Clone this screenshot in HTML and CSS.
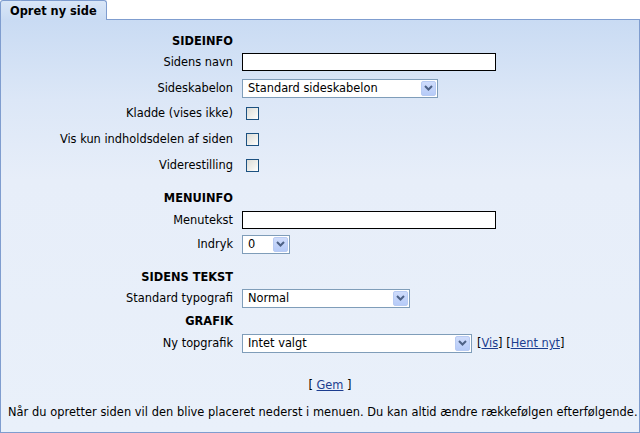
FILE: index.html
```html
<!DOCTYPE html>
<html lang="da">
  <head>
    <meta charset="utf-8">
    <title>Opret ny side</title>
    <link rel="stylesheet" href="styles.css">
  </head>
  <body>
    <div class="Tab-Bar">
      <div class="Tab">Opret ny side</div>
    </div>
    <div class="Panel">
      <form class="Form-Container">
        <div class="Row Head"><span class="Label">SIDEINFO</span></div>
        <div class="Row Sp1">
          <label class="Label">Sidens navn</label>
          <input type="text" class="Text-Input">
        </div>
        <div class="Row Sp6">
          <label class="Label">Sideskabelon</label>
          <div class="Select W196"><span>Standard sideskabelon</span><span class="Arrow"><svg width="9" height="6" viewBox="0 0 9 6"><path d="M1 1 L4.5 4.5 L8 1" fill="none" stroke="#4d6185" stroke-width="2"/></svg></span></div>
        </div>
        <div class="Row Sp5">
          <label class="Label">Kladde (vises ikke)</label>
          <input type="checkbox" class="Check">
        </div>
        <div class="Row Sp6">
          <label class="Label">Vis kun indholdsdelen af siden</label>
          <input type="checkbox" class="Check">
        </div>
        <div class="Row Sp6">
          <label class="Label">Viderestilling</label>
          <input type="checkbox" class="Check">
        </div>

        <div class="Row Head Sp13"><span class="Label">MENUINFO</span></div>
        <div class="Row Sp2">
          <label class="Label">Menutekst</label>
          <input type="text" class="Text-Input">
        </div>
        <div class="Row Sp4">
          <label class="Label">Indryk</label>
          <div class="Select W48"><span>0</span><span class="Arrow"><svg width="9" height="6" viewBox="0 0 9 6"><path d="M1 1 L4.5 4.5 L8 1" fill="none" stroke="#4d6185" stroke-width="2"/></svg></span></div>
        </div>

        <div class="Row Head Sp13"><span class="Label">SIDENS TEKST</span></div>
        <div class="Row Sp1">
          <label class="Label">Standard typografi</label>
          <div class="Select W168"><span>Normal</span><span class="Arrow"><svg width="9" height="6" viewBox="0 0 9 6"><path d="M1 1 L4.5 4.5 L8 1" fill="none" stroke="#4d6185" stroke-width="2"/></svg></span></div>
        </div>
        <div class="Row Head Sp3"><span class="Label">GRAFIK</span></div>
        <div class="Row Sp2">
          <label class="Label">Ny topgrafik</label>
          <div class="Field-Group">
            <div class="Select W230"><span>Intet valgt</span><span class="Arrow"><svg width="9" height="6" viewBox="0 0 9 6"><path d="M1 1 L4.5 4.5 L8 1" fill="none" stroke="#4d6185" stroke-width="2"/></svg></span></div>
            <span class="Links">[<a href="#">Vis</a>] [<a href="#">Hent nyt</a>]</span>
          </div>
        </div>
      </form>
      <div class="Save">[ <a href="#">Gem</a> ]</div>
      <p class="Note">Når du opretter siden vil den blive placeret nederst i menuen. Du kan altid ændre rækkefølgen efterfølgende.</p>
    </div>
  </body>
</html>
```

FILE: styles.css
```css
html, body {
  margin: 0;
  padding: 0;
}

body {
  width: 640px;
  height: 433px;
  background: #ffffff;
  font-family: 'DejaVu Sans', Verdana, sans-serif;
  font-size: 11.4px;
  color: #000000;
}

.Tab-Bar {
  display: flex;
  height: 19px;
}

.Tab {
  box-sizing: border-box;
  width: 107px;
  height: 20px;
  padding: 3px 0 0 9px;
  border: 1px solid #7f9dcf;
  border-bottom: none;
  border-radius: 3px 3px 0 0;
  background: linear-gradient(#d9e6f7, #c9dbf3);
  font-weight: bold;
  position: relative;
  z-index: 1;
}

.Panel {
  box-sizing: border-box;
  height: 414px;
  border: 1px solid #7f9dcf;
  background: linear-gradient(#c9dbf3 0px, #dce7f7 80px, #e7eef9 160px, #e9f0fa 100%);
}

.Form-Container {
  margin: 0;
  padding-top: 11px;
}

.Row {
  display: grid;
  grid-template-columns: 232px auto;
  column-gap: 9px;
  align-items: center;
  height: 20px;
}

.Label {
  text-align: right;
  white-space: nowrap;
}

.Head .Label {
  font-weight: bold;
}

.Sp1 { margin-top: 1px; }
.Sp2 { margin-top: 2px; }
.Sp3 { margin-top: 3px; }
.Sp4 { margin-top: 4px; }
.Sp5 { margin-top: 5px; }
.Sp6 { margin-top: 6px; }
.Sp13 { margin-top: 13px; }

.Text-Input {
  box-sizing: border-box;
  width: 254px;
  height: 18px;
  margin: 0;
  border: 1px solid #000000;
  background: #ffffff;
  font: inherit;
}

.Check {
  appearance: none;
  -webkit-appearance: none;
  box-sizing: border-box;
  width: 13px;
  height: 13px;
  margin: 0 0 0 4px;
  border: 1px solid #1c5180;
  background: linear-gradient(135deg, #dcdcd7 0%, #f0f0ec 60%, #ffffff 100%);
}

.Select {
  box-sizing: border-box;
  display: flex;
  align-items: center;
  justify-content: space-between;
  height: 19px;
  padding: 0 1px 0 5px;
  border: 1px solid #7f9db9;
  background: #ffffff;
}

.W48 { width: 48px; }
.W168 { width: 168px; }
.W196 { width: 196px; }
.W230 { width: 230px; }

.Arrow {
  box-sizing: border-box;
  display: flex;
  align-items: center;
  justify-content: center;
  width: 15px;
  height: 15px;
  border: 1px solid #b8cbf3;
  border-radius: 2px;
  background: linear-gradient(#cfdcfb, #b6cbf8);
}

.Field-Group {
  display: flex;
  align-items: center;
  gap: 5px;
}

a {
  color: #1c3d8f;
  text-decoration: underline;
}

.Save {
  margin-top: 25px;
  padding-left: 20px;
  text-align: center;
  line-height: 14px;
}

.Note {
  margin: 13px 0 0 7px;
  white-space: nowrap;
  line-height: 14px;
  letter-spacing: 0.04px;
}
```
